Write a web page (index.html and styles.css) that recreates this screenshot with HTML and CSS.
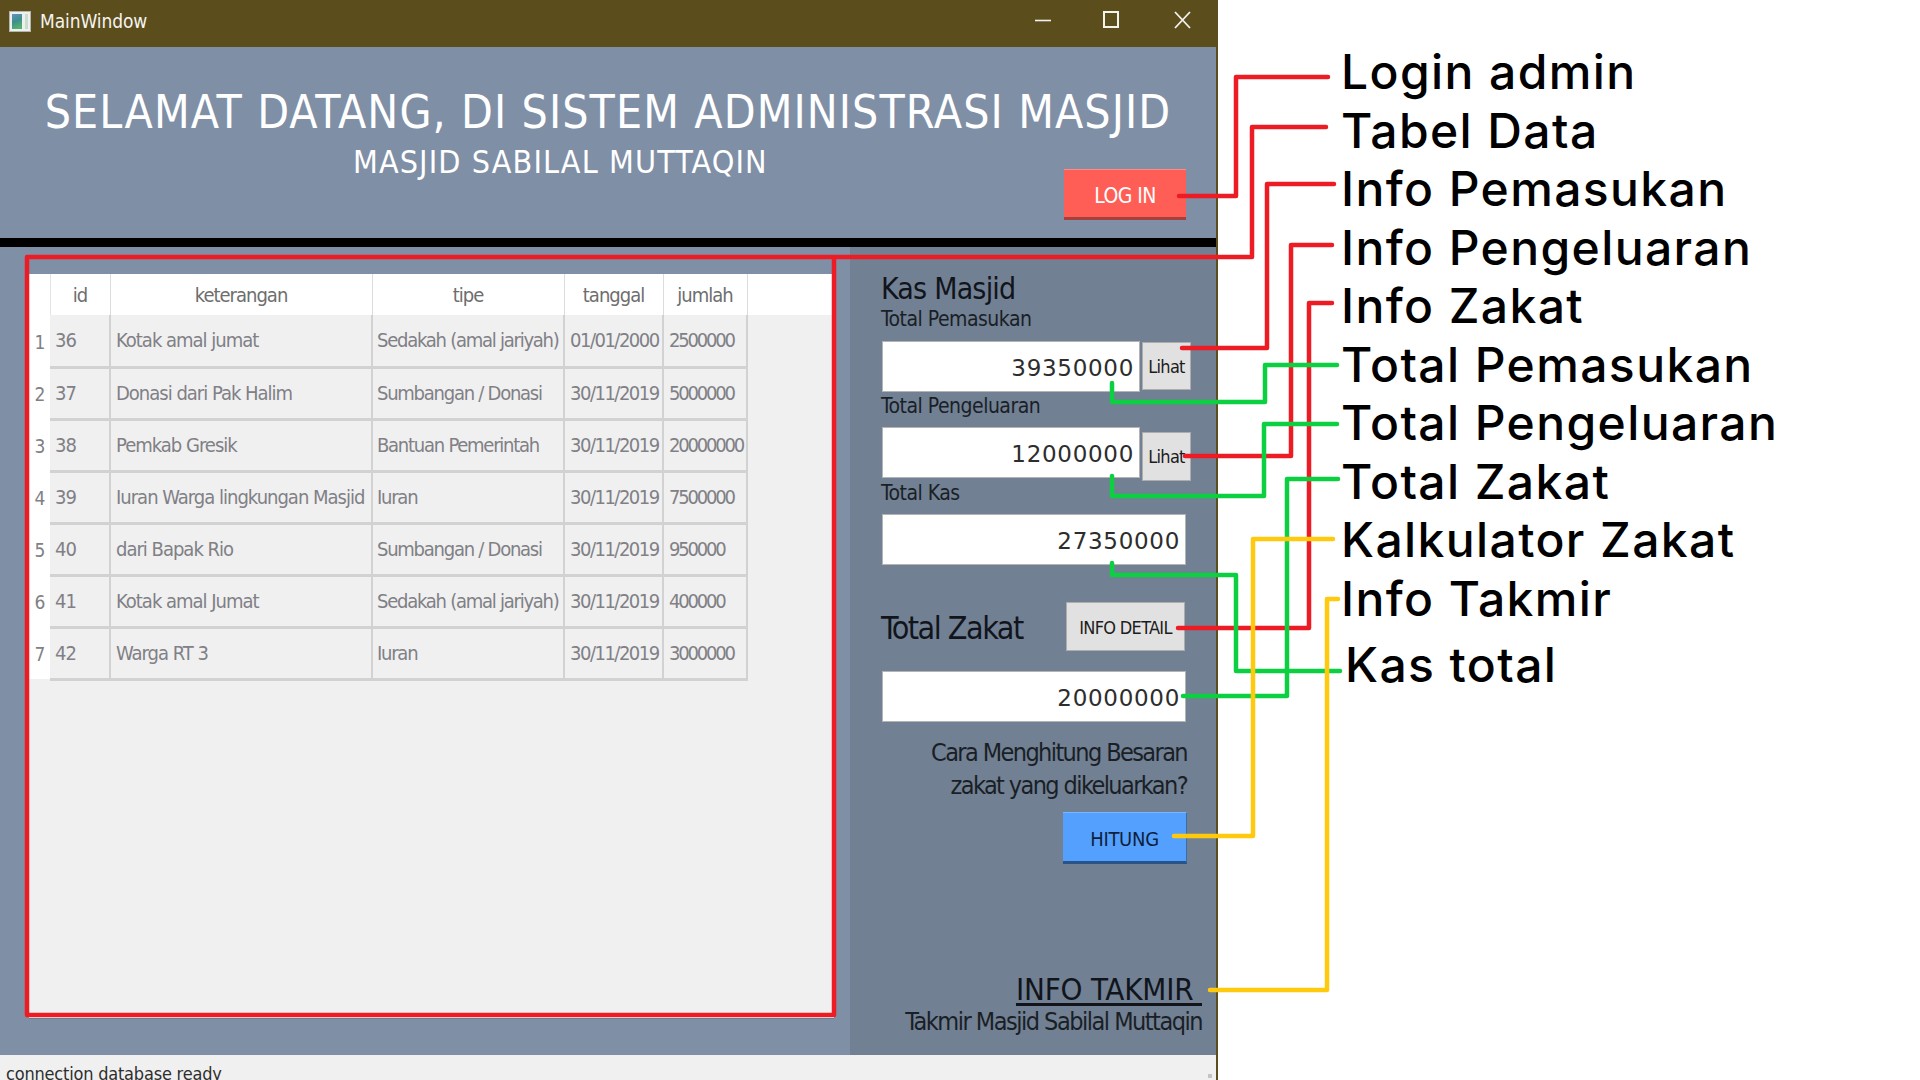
FILE: index.html
```html
<!DOCTYPE html>
<html lang="en">
  <head>
    <title>MainWindow</title>
    <link rel="stylesheet" href="styles.css">
  </head>
  <body>
    <div class="window">
      <div class="titlebar">
        <svg class="app-icon" width="22" height="21" viewBox="0 0 22 21">
          <defs>
            <linearGradient id="iconfill" x1="0" y1="0" x2="0.3" y2="1">
              <stop offset="0" stop-color="#5f93c4"/>
              <stop offset="0.55" stop-color="#3f8f8c"/>
              <stop offset="1" stop-color="#54b070"/>
            </linearGradient>
          </defs>
          <rect x="0.5" y="0.5" width="21" height="20" fill="#eef0f0" stroke="#b5b5ae"/>
          <rect x="3" y="3" width="10" height="15" fill="url(#iconfill)"/>
          <rect x="16" y="3" width="3" height="15" fill="#c9dcd0"/>
        </svg>
        <span class="title-text">MainWindow</span>
        <svg class="controls" width="156" height="18" viewBox="0 0 156 18" fill="none" stroke="#f2f2ee">
          <path d="M0 9.5H16" stroke-width="1.6"/>
          <rect x="69" y="1" width="14" height="15" stroke-width="2"/>
          <path d="M140 1L155 17M155 1L140 17" stroke-width="1.8"/>
        </svg>
      </div>

      <div class="header">
        <h1>SELAMAT DATANG, DI SISTEM ADMINISTRASI MASJID</h1>
        <div class="header-row">
          <h2>MASJID SABILAL MUTTAQIN</h2>
          <button class="btn-login">LOG IN</button>
        </div>
      </div>

      <div class="content">
        <div class="black-line"></div>
        <div class="table-side">
          <div class="table-area">
            <table class="data-table">
              <colgroup>
                <col class="c-num"><col class="c-id"><col class="c-ket"><col class="c-tipe"><col class="c-tgl"><col class="c-jml">
              </colgroup>
              <thead>
                <tr><th class="num"></th><th>id</th><th>keterangan</th><th>tipe</th><th>tanggal</th><th>jumlah</th></tr>
              </thead>
              <tbody>
                <tr><td class="num">1</td><td>36</td><td>Kotak amal jumat</td><td class="tipe">Sedakah (amal jariyah)</td><td class="tgl">01/01/2000</td><td class="jml">2500000</td></tr>
                <tr><td class="num">2</td><td>37</td><td>Donasi dari Pak Halim</td><td class="tipe">Sumbangan / Donasi</td><td class="tgl">30/11/2019</td><td class="jml">5000000</td></tr>
                <tr><td class="num">3</td><td>38</td><td>Pemkab Gresik</td><td class="tipe">Bantuan Pemerintah</td><td class="tgl">30/11/2019</td><td class="jml">20000000</td></tr>
                <tr><td class="num">4</td><td>39</td><td>Iuran Warga lingkungan Masjid</td><td class="tipe">Iuran</td><td class="tgl">30/11/2019</td><td class="jml">7500000</td></tr>
                <tr><td class="num">5</td><td>40</td><td>dari Bapak Rio</td><td class="tipe">Sumbangan / Donasi</td><td class="tgl">30/11/2019</td><td class="jml">950000</td></tr>
                <tr><td class="num">6</td><td>41</td><td>Kotak amal Jumat</td><td class="tipe">Sedakah (amal jariyah)</td><td class="tgl">30/11/2019</td><td class="jml">400000</td></tr>
                <tr><td class="num">7</td><td>42</td><td>Warga RT 3</td><td class="tipe">Iuran</td><td class="tgl">30/11/2019</td><td class="jml">3000000</td></tr>
              </tbody>
            </table>
          </div>
        </div>

        <div class="side-panel">
          <div class="kas-title">Kas Masjid</div>
          <div class="field-label">Total Pemasukan</div>
          <div class="field-row first">
            <div class="value short">39350000</div>
            <button class="btn-lihat">Lihat</button>
          </div>
          <div class="field-label">Total Pengeluaran</div>
          <div class="field-row">
            <div class="value short">12000000</div>
            <button class="btn-lihat lower">Lihat</button>
          </div>
          <div class="field-label">Total Kas</div>
          <div class="field-row">
            <div class="value">27350000</div>
          </div>
          <div class="zakat-row">
            <div class="zakat-title">Total Zakat</div>
            <button class="btn-detail">INFO DETAIL</button>
          </div>
          <div class="field-row zakat-value">
            <div class="value">20000000</div>
          </div>
          <p class="note">Cara Menghitung Besaran<br>zakat yang dikeluarkan?</p>
          <button class="btn-hitung">HITUNG</button>
          <div class="takmir-title">INFO TAKMIR&nbsp;</div>
          <div class="takmir-sub">Takmir Masjid Sabilal Muttaqin</div>
        </div>
      </div>

      <div class="statusbar">
        <span>connection database ready</span>
        <svg class="size-grip" width="10" height="10" viewBox="0 0 10 10" fill="#c4c4c4">
          <rect x="6" y="0" width="4" height="4"/>
          <rect x="0" y="6" width="4" height="4"/>
          <rect x="6" y="6" width="4" height="4"/>
        </svg>
      </div>
    </div>

    <div class="labels">
      <div>Login admin</div>
      <div>Tabel Data</div>
      <div>Info Pemasukan</div>
      <div>Info Pengeluaran</div>
      <div>Info Zakat</div>
      <div>Total Pemasukan</div>
      <div>Total Pengeluaran</div>
      <div>Total Zakat</div>
      <div>Kalkulator Zakat</div>
      <div>Info Takmir</div>
      <div class="last">Kas total</div>
    </div>

    <!-- connector lines drawn over the window -->
    <svg class="wires" width="1920" height="1080" viewBox="0 0 1920 1080" fill="none" stroke-width="4.5" stroke-linecap="round" stroke-linejoin="round">
      <g stroke="#ed1c24">
        <path d="M1252 127H1326M1252 127V257H27V1015H834V257" />
        <path d="M1179 196H1236V77H1328"/>
        <path d="M1182 348H1267V184H1334"/>
        <path d="M1185 456H1291V245H1332"/>
        <path d="M1178 628H1309V303H1332"/>
      </g>
      <g stroke="#0ccf41">
        <path d="M1112 383V402H1265V365H1337"/>
        <path d="M1112 476V496H1264V424H1337"/>
        <path d="M1183 696H1287V479H1338"/>
        <path d="M1112 563V575H1236V671H1340"/>
      </g>
      <g stroke="#ffc90e">
        <path d="M1174 836H1253V539H1333"/>
        <path d="M1210 990H1327V599H1338"/>
      </g>
    </svg>
  </body>
</html>
```

FILE: styles.css
```css
* {
  box-sizing: border-box;
}

body {
  margin: 0;
  width: 1920px;
  height: 1080px;
  overflow: hidden;
  display: flex;
  background-color: white;
  font-family: "DejaVu Sans Condensed", "DejaVu Sans", sans-serif;
}

button {
  font-family: inherit;
  padding: 0;
}

.window {
  width: 1218px;
  height: 1080px;
  display: flex;
  flex-direction: column;
  background-color: #7f8fa6;
  border-right: 2px solid #5c4d1c;
}

.titlebar {
  height: 47px;
  flex: none;
  display: flex;
  align-items: center;
  padding-left: 9px;
  background-color: #5c4d1c;
  color: #f4f4f0;
}

.app-icon {
  margin-top: -4px;
}

.title-text {
  margin-left: 9px;
  margin-top: -5px;
  font-size: 19px;
  letter-spacing: -0.1px;
}

.controls {
  margin-left: auto;
  margin-right: 25px;
  margin-top: -7px;
}

.header {
  height: 191px;
  flex: none;
  padding-top: 37px;
  color: white;
}

h1 {
  margin: 0;
  font-size: 46px;
  line-height: 56px;
  font-weight: normal;
  text-align: center;
  letter-spacing: 1.1px;
}

.header-row {
  display: flex;
  justify-content: space-between;
  margin-top: 4px;
  padding-left: 353px;
  padding-right: 30px;
}

h2 {
  margin: 0;
  font-size: 32px;
  line-height: 36px;
  font-weight: normal;
  letter-spacing: 1.1px;
}

.btn-login {
  width: 122px;
  height: 51px;
  margin-top: 25px;
  padding-top: 5px;
  background-color: #ff5e57;
  color: white;
  border: none;
  border-top: 1px solid #ff8a84;
  border-bottom: 3px solid #a5403c;
  font-size: 21px;
  letter-spacing: -0.6px;
}

.content {
  flex: 1;
  display: flex;
  flex-wrap: wrap;
  align-content: flex-start;
  min-height: 0;
  background-image: linear-gradient(#718093, #718093);
  background-position: right top;
  background-size: 366px 100%;
  background-repeat: no-repeat;
}

.black-line {
  width: 100%;
  height: 9px;
  background-color: black;
}

.table-side {
  width: 850px;
  height: 808px;
  padding: 27px 16px 38px 29px;
}

.table-area {
  height: 100%;
  background-color: #f0f0f0;
  background-image: linear-gradient(white, white);
  background-size: 100% 41px;
  background-repeat: no-repeat;
  box-shadow: 0 1px #ffffff, 0 2px #6c7a8e;
}

.data-table {
  table-layout: fixed;
  width: 718px;
  border-collapse: collapse;
  font-size: 20px;
  letter-spacing: -1px;
  color: #808086;
}

.c-num { width: 21px; }
.c-id { width: 60px; }
.c-ket { width: 262px; }
.c-tipe { width: 192px; }
.c-tgl { width: 99px; }
.c-jml { width: 84px; }

.data-table th {
  height: 41px;
  padding: 0;
  font-weight: normal;
  background-color: white;
  color: #6e6e6e;
  border-right: 1px solid #dcdcdc;
}

.data-table th.num {
  border-right: 1px solid #e4e4e4;
}

.data-table td {
  height: 52px;
  padding: 0 0 0 5px;
  white-space: nowrap;
  border-right: 2px solid #d2d2d2;
  border-bottom: 3px solid #d2d2d2;
}

.data-table td.tipe {
  padding-left: 4px;
  letter-spacing: -1.25px;
}

.data-table td.tgl {
  letter-spacing: -1.5px;
}

.data-table td.jml {
  letter-spacing: -2.2px;
}

.data-table td.num {
  padding: 2px 0 0;
  text-align: center;
  background-color: white;
  border: none;
  font-size: 19px;
}

.side-panel {
  width: 366px;
  height: 808px;
  padding: 25px 0 0 32px;
  color: #1a1f26;
}

.kas-title {
  margin-left: -1px;
  font-size: 30px;
  line-height: 34px;
  letter-spacing: -0.8px;
  color: #11151b;
}

.field-label {
  margin-left: -1px;
  font-size: 21px;
  line-height: 26px;
  letter-spacing: -0.5px;
}

.field-row {
  display: flex;
  gap: 2px;
  height: 51px;
  margin-top: 8px;
  margin-bottom: 2px;
}

.field-row.first {
  margin-top: 9px;
  margin-bottom: 1px;
}

.value {
  width: 304px;
  height: 51px;
  padding-right: 5px;
  background-color: white;
  border: 1px solid #b4b4b4;
  font-family: "DejaVu Sans", sans-serif;
  font-size: 23px;
  line-height: 52px;
  letter-spacing: 0.7px;
  text-align: right;
  color: #2d2d2d;
}

.value.short {
  width: 258px;
}

.btn-lihat {
  width: 49px;
  height: 48px;
  margin-top: 1px;
  background-color: #e1e1e1;
  border: 1px solid #adadad;
  color: #1c1c1c;
  font-size: 18px;
  letter-spacing: -0.7px;
}

.btn-lihat.lower {
  margin-top: 5px;
  height: 49px;
}

.zakat-row {
  display: flex;
  justify-content: space-between;
  align-items: center;
  width: 303px;
  height: 49px;
  margin-top: 37px;
}

.zakat-title {
  margin-left: -1px;
  padding-top: 3px;
  font-size: 32px;
  letter-spacing: -1.5px;
  color: #11151b;
}

.btn-detail {
  width: 119px;
  height: 49px;
  padding-top: 1px;
  background-color: #e1e1e1;
  border: 1px solid #adadad;
  color: #1c1c1c;
  font-size: 18px;
  letter-spacing: -0.7px;
}

.field-row.zakat-value {
  margin-top: 20px;
  margin-bottom: 0;
}

.note {
  width: 305px;
  margin: 14px 0 10px;
  font-size: 25px;
  line-height: 33px;
  letter-spacing: -1.6px;
  text-align: right;
}

.btn-hitung {
  display: block;
  width: 124px;
  height: 52px;
  margin-left: 181px;
  padding-top: 4px;
  background-color: #54a0ff;
  border: none;
  border-top: 1px solid #79b6ff;
  border-bottom: 3px solid #2a5488;
  border-right: 1px solid #3a6ea8;
  color: #0d1f3a;
  font-size: 20px;
  letter-spacing: -0.3px;
}

.takmir-title {
  width: 320px;
  margin-top: 107px;
  font-size: 31px;
  line-height: 36px;
  letter-spacing: -0.2px;
  text-align: right;
  text-decoration: underline;
  text-underline-offset: 3px;
  color: #11151b;
}

.takmir-sub {
  width: 320px;
  font-size: 25px;
  line-height: 30px;
  letter-spacing: -1.5px;
  text-align: right;
  white-space: nowrap;
}

.statusbar {
  height: 25px;
  flex: none;
  display: flex;
  justify-content: space-between;
  padding: 7px 2px 0 6px;
  background-color: #f0f0f0;
  color: #2e2e2e;
  font-size: 18px;
  line-height: 24px;
  overflow: hidden;
  letter-spacing: -0.2px;
}

.size-grip {
  margin-top: 12px;
  margin-right: 2px;
}

.labels {
  padding: 43px 0 0 123px;
  font-family: Inter, "Noto Sans", sans-serif;
  font-size: 48px;
  font-weight: 500;
  line-height: 58.5px;
  letter-spacing: 1.4px;
  color: black;
  white-space: nowrap;
}

.labels .last {
  margin-top: 8px;
  margin-left: 4px;
}

.wires {
  position: absolute;
  left: 0;
  top: 0;
  pointer-events: none;
}
```
